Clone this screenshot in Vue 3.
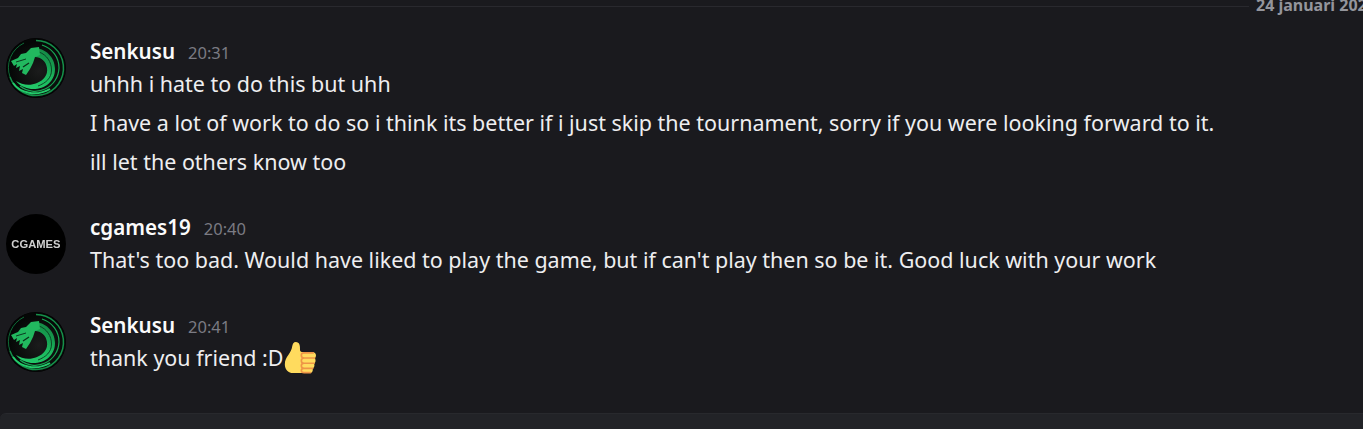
<script setup>
const groups = [
  { id: 1, name: 'Senkusu', time: '20:31', avatar: 'dragon', lines: ['uhhh i hate to do this but uhh', 'I have a lot of work to do so i think its better if i just skip the tournament, sorry if you were looking forward to it.', 'ill let the others know too'] },
  { id: 2, name: 'cgames19', time: '20:40', avatar: 'cgames', lines: ["That's too bad. Would have liked to play the game, but if can't play then so be it. Good luck with your work"] },
  { id: 3, name: 'Senkusu', time: '20:41', avatar: 'dragon', lines: ['thank you friend :D'], emoji: true }
]
</script>

<template>
  <div class="page">
    <div class="divider">
      <span class="rule"></span>
      <span class="date">24 januari 2024</span>
    </div>
    <div class="list">
      <article v-for="g in groups" :key="g.id" class="group">
        <div class="avatar" :class="g.avatar">
          <svg v-if="g.avatar === 'dragon'" viewBox="0 0 60 60" width="60" height="60">
            <defs>
              <radialGradient :id="'core' + g.id" cx="0.55" cy="0.55" r="0.5">
                <stop offset="0" stop-color="#1b1c1c" />
                <stop offset="1" stop-color="#050706" />
              </radialGradient>
              <linearGradient :id="'band' + g.id" x1="0.9" y1="0" x2="0.2" y2="1">
                <stop offset="0" stop-color="#0f7a3d" />
                <stop offset="0.5" stop-color="#1db85e" />
                <stop offset="1" stop-color="#24cc6b" />
              </linearGradient>
              <filter :id="'soft' + g.id" x="-10%" y="-10%" width="120%" height="120%">
                <feGaussianBlur stdDeviation="0.45" />
              </filter>
            </defs>
            <circle cx="30" cy="30" r="29.5" :fill="'url(#core' + g.id + ')'" />
            <g :filter="'url(#soft' + g.id + ')'">
              <path d="M30 2.500 A27.500 27.500 0 1 1 4 39" fill="none" stroke="#14904a" stroke-width="1.500" />
              <path d="M4 39 A27.500 27.500 0 0 1 18 5" fill="none" stroke="#0e6a36" stroke-width="1" />
              <path d="M36 7 A24 24 0 0 1 53 30 A24 24 0 0 1 14 48" fill="none" stroke="#17a653" stroke-width="1.200" />
              <path d="M26 10 C38 9 49 18 49 31 C49 44 38 52 25 51 C19 50 14 48 10 43 C16 47 24 48 31 45 C38 42 42 37 41 30 C40 23 35 19 29 19 Z" :fill="'url(#band' + g.id + ')'" />
              <path d="M33 14 C41 17 45.500 24 45.500 32 C45.500 40 40 45 32 48" fill="none" stroke="#0a4525" stroke-width="1" />
              <path d="M7 45 C14 55 30 59 44 51" fill="none" stroke="#22cb6a" stroke-width="2" />
              <path d="M5 23 L12 20 L15 16 L20 15 L25 10 L33 9 L34 17 L29 19 L27 25 L24 31 L20 37 L16 35 L17 31 L13 33 L14 28 L10 30 L11 26 L8 28 Z" fill="#22b85e" />
              <path d="M10 24 L20 21" fill="none" stroke="#0a3a20" stroke-width="1" />
              <path d="M17 29 L23 25" fill="none" stroke="#0a2a18" stroke-width="1.200" />
            </g>
          </svg>
          <span v-else class="logo">CGAMES</span>
        </div>
        <div class="content">
          <header class="meta">
            <span class="name">{{ g.name }}</span>
            <time class="time">{{ g.time }}</time>
          </header>
          <div v-for="(line, i) in g.lines" :key="i" class="line">
            {{ line }}<svg v-if="g.emoji" class="emoji" viewBox="0 0 36 36">
              <path fill="#FFDB5E" d="M14 1C11.500 1 10.500 3 10 6 9.500 9.500 8 12 6 15 3.500 18.500 2 21 2 25.500 2 31 6 35 11 35H29C31 35 32.500 33.500 32.500 31.500 32.500 31 32.400 30.500 32.200 30 33.500 29.300 34.300 28 34.300 26.500 34.300 25.800 34.100 25.200 33.800 24.600 35 23.900 35.500 22.700 35.500 21.200 35.500 20.300 35.200 19.500 34.700 18.800 35.500 18 36 17 36 15.800 36 13.500 34.300 12 32 12H22C19.500 12 18.500 11.500 18.500 9 18.800 5 18 1 14 1Z" />
              <path fill="none" stroke="#EE9547" stroke-width="1.800" stroke-linecap="round" d="M33 13H23C21 13 20 14 20 15.500 20 17 21 18.500 23 18.500H34.500M23 18.500C21 18.500 20 20 20 21.500 20 23 21 24.300 23 24.300H34M23 24.300C21 24.300 20 25.500 20 27 20 28.500 21 29.800 23 29.800H32.500M23 29.800C21 29.800 20 31 20 32.300 20 33.500 21 34.500 23 34.500H30" />
            </svg>
          </div>
        </div>
      </article>
    </div>
    <div class="composer"></div>
  </div>
</template>

<style>
html, body { margin: 0; background: #1a1a1e; overflow: hidden; }
</style>

<style scoped>
.page {
  width: 1363px;
  height: 429px;
  background: #1a1a1e;
  position: relative;
  overflow: hidden;
  font-family: "Noto Sans", sans-serif;
  color: #eeeef0;
}
.divider {
  display: flex;
  align-items: center;
  gap: 7px;
  height: 13px;
  white-space: nowrap;
}
.rule {
  width: 1249px;
  flex: none;
  height: 1px;
  background: #29292e;
}
.date {
  font-size: 16px;
  font-weight: 700;
  color: #94959c;
  line-height: 20px;
  margin-top: -3px;
}
.list {
  padding-top: 25px;
  display: flex;
  flex-direction: column;
  gap: 33px;
}
.group {
  display: flex;
  padding-left: 6px;
  gap: 24px;
}
.avatar {
  width: 60px;
  height: 60px;
  border-radius: 50%;
  flex: none;
  background: #000;
  display: flex;
  align-items: center;
  justify-content: center;
  overflow: hidden;
}
.logo {
  font-family: "Liberation Sans", sans-serif;
  font-size: 10px;
  font-weight: 700;
  color: #cfcfcf;
  transform: scaleX(1.12);
}
.meta {
  display: flex;
  align-items: baseline;
  gap: 13px;
  height: 26px;
  line-height: 27px;
}
.name {
  font-size: 20.6px;
  font-weight: 600;
  color: #fbfbfb;
}
.time {
  font-size: 16.5px;
  color: #7b7b83;
}
.line {
  font-size: 21.48px;
  line-height: 39px;
  white-space: nowrap;
  display: flex;
  align-items: center;
  height: 39px;
}
.emoji { width: 33px; height: 33px; flex: none; margin: -1px 0 0 -1px; }
.composer {
  position: absolute;
  left: 0;
  right: 0;
  bottom: 0;
  height: 16px;
  background: #222327;
  border-top: 1px solid #28292d;
  border-top-left-radius: 6px;
  box-sizing: border-box;
}
</style>
